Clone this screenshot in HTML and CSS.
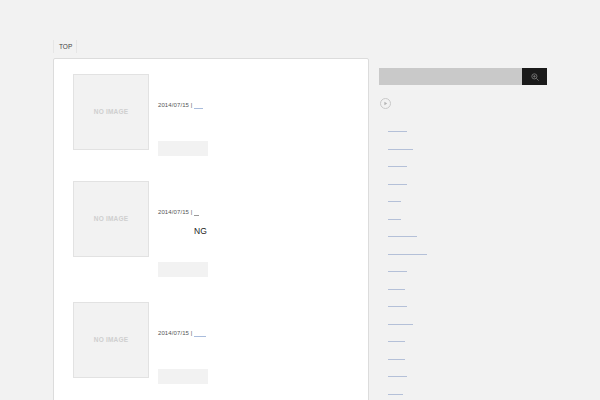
FILE: index.html
```html
<!doctype html>
<html lang="en">
<head>
  <meta charset="UTF-8" />
  <title>TOP</title>
  <link rel="stylesheet" href="styles.css">
</head>
<body>
  <div class="container">
    <main class="content">
      <div class="breadcrumb"><span class="crumb">TOP</span></div>
      <div class="post-list">
        <article class="post">
          <div class="thumb">NO IMAGE</div>
          <div class="post-body">
            <p class="meta">2014/07/15 | <a href="#" class="cat-md">&nbsp;</a></p>
            <a href="#" class="more"></a>
          </div>
        </article>
        <article class="post">
          <div class="thumb">NO IMAGE</div>
          <div class="post-body">
            <p class="meta">2014/07/15 | <a href="#" class="cat-sm">&nbsp;</a></p>
            <p class="title">NG</p>
            <a href="#" class="more more-after-title"></a>
          </div>
        </article>
        <article class="post">
          <div class="thumb">NO IMAGE</div>
          <div class="post-body">
            <p class="meta">2014/07/15 | <a href="#" class="cat-lg">&nbsp;</a></p>
            <a href="#" class="more"></a>
          </div>
        </article>
      </div>
    </main>

    <aside class="sidebar">
      <form class="search">
        <input class="search-input" type="text" />
        <button class="search-btn" type="button" aria-label="Search">
          <svg width="8" height="8" viewBox="0 0 9 9" fill="none" stroke="#777" stroke-width="1">
            <circle cx="3.8" cy="3.8" r="2.9" />
            <path d="M6 6l2.6 2.6M2.4 3.8h2.8M3.8 2.4v2.8" />
          </svg>
        </button>
      </form>
      <svg class="heading-icon" width="11" height="11" viewBox="0 0 11 11">
        <circle cx="5.5" cy="5.5" r="5" fill="none" stroke="#c8c8c8" />
        <path d="M4.4 3.8l2.8 1.7-2.8 1.7z" fill="#b4b4b4" />
      </svg>
      <ul class="side-links">
        <li><a href="#" class="w-18">&nbsp;</a></li>
        <li><a href="#" class="w-25">&nbsp;</a></li>
        <li><a href="#" class="w-18">&nbsp;</a></li>
        <li><a href="#" class="w-18">&nbsp;</a></li>
        <li><a href="#" class="w-13">&nbsp;</a></li>
        <li><a href="#" class="w-13">&nbsp;</a></li>
        <li><a href="#" class="w-29">&nbsp;</a></li>
        <li><a href="#" class="w-39">&nbsp;</a></li>
        <li><a href="#" class="w-18">&nbsp;</a></li>
        <li><a href="#" class="w-17">&nbsp;</a></li>
        <li><a href="#" class="w-18">&nbsp;</a></li>
        <li><a href="#" class="w-25">&nbsp;</a></li>
        <li><a href="#" class="w-17">&nbsp;</a></li>
        <li><a href="#" class="w-17">&nbsp;</a></li>
        <li><a href="#" class="w-18">&nbsp;</a></li>
        <li><a href="#" class="w-15">&nbsp;</a></li>
      </ul>
    </aside>
  </div>
</body>
</html>
```
FILE: styles.css
```css
html, body {
  height: 400px;
  overflow: hidden;
}

body {
  margin: 0;
  padding: 0;
  background-color: #f2f2f2;
  color: #333;
  font-family: "Liberation Sans", Arial, sans-serif;
}

.container {
  display: flex;
  align-items: flex-start;
  gap: 10px;
  height: 360px;
  padding: 40px 0 0 53px;
  overflow: hidden;
}

.content {
  width: 316px;
  flex-shrink: 0;
}

.breadcrumb {
  display: flex;
  margin-bottom: 5px;
}

.crumb {
  padding: 0 4px 0 5px;
  height: 13px;
  line-height: 13px;
  font-size: 6.5px;
  color: #444;
  border-left: 1px solid #e6e6e6;
  border-right: 1px solid #e6e6e6;
}

.post-list {
  display: flex;
  flex-direction: column;
  gap: 25px;
  height: 400px;
  padding: 15px 0 0 19px;
  box-sizing: border-box;
  background-color: #fff;
  border: 1px solid #dcdcdc;
  border-radius: 2px;
}

.post {
  display: flex;
  gap: 9px;
}

.thumb {
  display: flex;
  align-items: center;
  justify-content: center;
  width: 76px;
  height: 76px;
  padding-bottom: 1px;
  flex-shrink: 0;
  box-sizing: border-box;
  background-color: #f2f2f2;
  border: 1px solid #e2e2e2;
  color: #cfcfcf;
  font-size: 6.5px;
  font-weight: bold;
  letter-spacing: 0.2px;
}

.post-body {
  display: flex;
  flex-direction: column;
  flex-grow: 1;
  padding-top: 27px;
}

.meta {
  margin: 0;
  height: 9px;
  line-height: 9px;
  font-size: 6px;
  letter-spacing: 0.1px;
  color: #555;
}

.meta a {
  display: inline-block;
  height: 7px;
  vertical-align: top;
  border-bottom: 1px solid #a9bcdc;
  text-decoration: none;
}

.cat-sm { width: 5px; }
.cat-md { width: 9px; }
.cat-lg { width: 12px; }

.meta .cat-sm {
  border-bottom-color: #999;
}

.title {
  margin: 8px 0 0 36px;
  height: 12px;
  line-height: 12px;
  font-size: 8.5px;
  color: #222;
}

.more {
  display: block;
  width: 50px;
  height: 15px;
  margin-top: 31px;
  background-color: #f2f2f2;
}

.more-after-title {
  margin-top: 25px;
}

.sidebar {
  width: 168px;
  padding-top: 28px;
}

.search {
  display: flex;
  height: 17px;
  margin: 0;
}

.search-input {
  flex: 1 1 0;
  min-width: 0;
  padding: 0;
  background-color: #c9c9c9;
  border: none;
}

.search-btn {
  display: flex;
  align-items: center;
  justify-content: center;
  flex: 0 0 25px;
  padding: 0;
  background-color: #1a1a1a;
  border: none;
}

.heading-icon {
  display: block;
  margin: 13px 0 0 1px;
}

.side-links {
  list-style: none;
  margin: 13px 0 0;
  padding: 0 0 0 9px;
}

.side-links li {
  height: 17.5px;
}

.side-links a {
  display: block;
  height: 9px;
  border-bottom: 1px solid #b4c0d8;
  font-size: 6px;
  text-decoration: none;
}

.w-13 { width: 13px; }
.w-15 { width: 15px; }
.w-17 { width: 17px; }
.w-18 { width: 18.5px; }
.w-25 { width: 25px; }
.w-29 { width: 29px; }
.w-39 { width: 39px; }
```
